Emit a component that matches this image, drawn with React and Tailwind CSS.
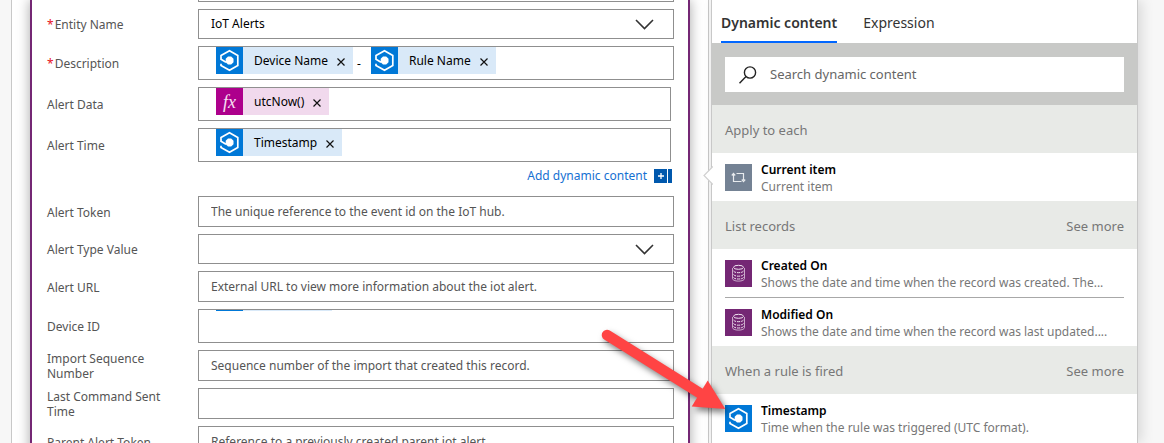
import React from "react";

const box = "border border-[#8f8f8f] bg-white text-[12px]";

function IoTIcon({ className = "" }) {
  return (
    <svg className={"size-[27px] shrink-0 " + className} viewBox="0 0 27 27" aria-hidden="true">
      <rect width="27" height="27" fill="#0078d7" />
      <path
        d="M10 15.200 5 12.200V8.600L13.500 3.800 21.800 8.600V18.400L13.500 23.200 5 18.400V16.800"
        fill="none"
        stroke="#fff"
        strokeWidth="1.700"
      />
      <path d="M12 9.500h3.200l2.300 2.300v3.400l-2.300 2.300h-3.200l-2.300-2.300v-3.400z" fill="#fff" />
    </svg>
  );
}

function FxIcon() {
  return (
    <span className="flex size-[27px] shrink-0 items-center justify-center bg-[#ad008c] font-['Liberation_Serif',serif] text-[18px] leading-none text-[#f8e0f3] italic">
      fx
    </span>
  );
}

function DatabaseIcon() {
  return (
    <svg className="size-[27px] shrink-0" viewBox="0 0 27 27" aria-hidden="true">
      <rect width="27" height="27" fill="#742774" />
      <g fill="none" stroke="#f0e4f0" strokeWidth="1">
        <ellipse cx="13.500" cy="7.300" rx="5" ry="2" />
        <path d="M7.500 8v10.500c0 1.500 2.500 2.600 6 2.600s6-1.100 6-2.600V8" strokeOpacity="0.7" />
        <path d="M8.500 11c1 1.300 2.700 1.700 5 1.700s4-.4 5-1.700M8.500 14.500c1 1.300 2.700 1.700 5 1.700s4-.4 5-1.700" strokeDasharray="3 1" />
        <path d="M8.500 17.500c1 1.300 2.700 1.500 5 1.500s4-.2 5-1.500" strokeDasharray="3 1" />
      </g>
    </svg>
  );
}

function LoopIcon() {
  return (
    <svg className="size-[27px] shrink-0" viewBox="0 0 27 27" aria-hidden="true">
      <rect width="27" height="27" fill="#748294" />
      <g fill="none" stroke="#e8ebee" strokeWidth="1.200">
        <path d="M8.500 10v7.500h8M11.500 9.500h7V16" />
        <path d="M6.800 11.500 8.500 9.500l1.700 2M16.800 15.500l1.700 2 1.700-2" />
      </g>
    </svg>
  );
}

function Chip({ fx, children }) {
  return (
    <span className={"flex h-[27px] items-center pr-2 text-black " + (fx ? "bg-[#f1d9ed]" : "bg-[#d9e9f8]")}>
      {fx ? <FxIcon /> : <IoTIcon />}
      <span className="ml-[11px] whitespace-nowrap">{children}</span>
      <button type="button" aria-label="Remove" className="ml-[9px]">
        <svg className="mt-[2px] size-2" viewBox="0 0 8 8" aria-hidden="true">
          <path d="M0.500 0.500l7 7M7.500 0.500l-7 7" stroke="#111" strokeWidth="1.200" />
        </svg>
      </button>
    </span>
  );
}

function Row({ id, label, required, children }) {
  return (
    <div className="flex items-start">
      <div className="flex min-h-[30px] w-[151px] shrink-0 items-center self-stretch pt-px pr-6 leading-[15px]">
        {required && <span className="mr-px text-[#e81123]">*</span>}
        <label htmlFor={id}>{label}</label>
      </div>
      <div className="min-w-0 flex-1">{children}</div>
    </div>
  );
}

function TokenField({ id, children, narrow }) {
  return (
    <div className={"flex h-[34px] items-start overflow-hidden pl-[17px] " + box + (narrow ? " mr-[3px]" : "")}>
      {children}
      <input id={id} className="h-7 min-w-0 flex-1 outline-none" />
    </div>
  );
}

function TextField({ id, placeholder }) {
  return (
    <input
      id={id}
      placeholder={placeholder}
      className={"block h-[31px] w-full px-3 pb-px outline-none placeholder:text-[#555] " + box}
    />
  );
}

function SelectField({ id, value }) {
  return (
    <div className="relative">
      <select id={id} className={"block h-[30px] w-full appearance-none px-3 pb-px text-black outline-none " + box}>
        <option>{value}</option>
      </select>
      <svg
        className="pointer-events-none absolute top-[10px] right-5 h-[11px] w-[19px]"
        viewBox="0 0 19 11"
        fill="none"
        aria-hidden="true"
      >
        <path d="M1 1l8.500 8.500L18 1" stroke="#333" strokeWidth="1.600" />
      </svg>
    </div>
  );
}

function Section({ title, more }) {
  return (
    <div className="flex h-12 items-center justify-between bg-[#e8eae7] px-[13px] pt-1 text-[13px] text-[#777]">
      <h3>{title}</h3>
      {more && <button type="button">See more</button>}
    </div>
  );
}

function Item({ icon, title, text }) {
  return (
    <button type="button" className="flex h-12 w-full items-start px-[13px] pt-[8px] text-left">
      <span className="mt-[3px] shrink-0">{icon}</span>
      <span className="ml-[9px] min-w-0 text-[12px] leading-[17px]">
        <span className="block font-semibold text-black">{title}</span>
        <span className="block whitespace-nowrap text-[#777]">{text}</span>
      </span>
    </button>
  );
}

export default function App() {
  return (
    <div className="relative flex h-screen overflow-hidden bg-[#f7f7f7] pr-[26px] pl-[11px] font-['Noto_Sans',sans-serif]">
      <main className="min-w-0 flex-1 border-x border-[#c8c8c8] bg-white px-[18px]">
        <form className="flex min-h-full flex-col gap-[7px] border-x-2 border-[#742774] bg-white pr-[14px] pb-4 pl-[15px] text-[12px] text-[#555] shadow-[0_0_12px_rgba(0,0,0,0.35)]">
          <div className="-mt-[29px] ml-[151px]">
            <input aria-label="Environment" className={"block h-[31px] w-full " + box} />
          </div>
          <Row id="entity" label="Entity Name" required>
            <SelectField id="entity" value="IoT Alerts" />
          </Row>
          <Row id="description" label="Description" required>
            <TokenField id="description">
              <Chip>Device Name</Chip>
              <span className="w-[18px] pt-[8px] pl-1 text-black">-</span>
              <Chip>Rule Name</Chip>
            </TokenField>
          </Row>
          <Row id="data" label="Alert Data">
            <TokenField id="data" narrow>
              <Chip fx>utcNow()</Chip>
            </TokenField>
          </Row>
          <div>
            <Row id="time" label="Alert Time">
              <TokenField id="time" narrow>
                <Chip>Timestamp</Chip>
              </TokenField>
            </Row>
            <div className="flex h-[27px] items-center justify-end pr-[2px]">
              <button type="button" className="flex items-center gap-[7px] text-[12px] text-[#1570d2]">
                Add dynamic content
                <svg className="h-[14px] w-[18px]" viewBox="0 0 18 14" aria-hidden="true">
                  <path d="M0 0h13v14H0zM14 0h4v14h-4z" fill="#0058ad" />
                  <path d="M4 7h6M7 4v6" stroke="#fff" strokeWidth="1.300" />
                </svg>
              </button>
            </div>
          </div>
          <Row id="token" label="Alert Token">
            <TextField id="token" placeholder="The unique reference to the event id on the IoT hub." />
          </Row>
          <Row id="type" label="Alert Type Value">
            <SelectField id="type" value="" />
          </Row>
          <Row id="url" label="Alert URL">
            <TextField id="url" placeholder="External URL to view more information about the iot alert." />
          </Row>
          <Row id="device" label="Device ID">
            <TokenField id="device">
              <span className="h-px w-[27px] bg-[#0078d7]" />
              <span className="h-px w-[89px] bg-[#d9e9f8]" />
            </TokenField>
          </Row>
          <Row id="sequence" label="Import Sequence Number">
            <TextField id="sequence" placeholder="Sequence number of the import that created this record." />
          </Row>
          <Row id="command" label="Last Command Sent Time">
            <TextField id="command" />
          </Row>
          <Row id="parent" label="Parent Alert Token">
            <TextField id="parent" placeholder="Reference to a previously created parent iot alert" />
          </Row>
        </form>
      </main>

      <aside className="relative ml-[2px] w-[427px] shrink-0 border-x border-[#c8c8c8] bg-white shadow-[4px_0_12px_rgba(0,0,0,0.12)]">
        <svg className="absolute top-[166px] -left-[9px] h-[19px] w-[10px]" viewBox="0 0 10 19" aria-hidden="true">
          <path d="M10 0.500L1 9.500l9 9" fill="#fff" stroke="#d0d0d0" strokeWidth="1.200" />
        </svg>
        <div role="tablist" className="flex h-[43px] gap-[26px] pl-[9px] text-[14px] text-[#333]">
          <button type="button" role="tab" aria-selected="true" className="border-b-2 border-[#0066ff] pt-1 font-semibold">
            Dynamic content
          </button>
          <button type="button" role="tab" aria-selected="false" className="border-b-2 border-transparent pt-1">
            Expression
          </button>
        </div>
        <div className="bg-[#c8c9c7] px-[13px] pt-[14px] pb-[13px]">
          <div className="flex h-[35px] items-center bg-white pl-[14px]">
            <svg className="size-[18px] shrink-0" viewBox="0 0 18 18" fill="none" stroke="#222" strokeWidth="1.400" aria-hidden="true">
              <circle cx="11" cy="6.500" r="5.600" />
              <path d="M7 10.500L0.500 17.200" />
            </svg>
            <input
              aria-label="Search dynamic content"
              placeholder="Search dynamic content"
              className="ml-[13px] min-w-0 flex-1 pt-px text-[13px] outline-none placeholder:text-[#666]"
            />
          </div>
        </div>
        <Section title="Apply to each" />
        <Item icon={<LoopIcon />} title="Current item" text="Current item" />
        <Section title="List records" more />
        <Item icon={<DatabaseIcon />} title="Created On" text="Shows the date and time when the record was created. The..." />
        <hr className="mx-[13px] border-[#a8a8a8]" />
        <Item icon={<DatabaseIcon />} title="Modified On" text="Shows the date and time when the record was last updated...." />
        <Section title="When a rule is fired" more />
        <Item icon={<IoTIcon />} title="Timestamp" text="Time when the rule was triggered (UTC format)." />
        <svg
          className="pointer-events-none absolute top-[320px] -left-[122px] h-[110px] w-[150px] overflow-visible drop-shadow-[3px_4px_3px_rgba(0,0,0,0.5)]"
          viewBox="590 320 150 110"
          aria-hidden="true"
        >
          <path d="M607 335L702 394.500" stroke="#ff4444" strokeWidth="10.500" strokeLinecap="round" />
          <path d="M707.700 380.500L725.300 409 691.700 406.500z" fill="#ff4444" />
        </svg>
      </aside>
    </div>
  );
}
